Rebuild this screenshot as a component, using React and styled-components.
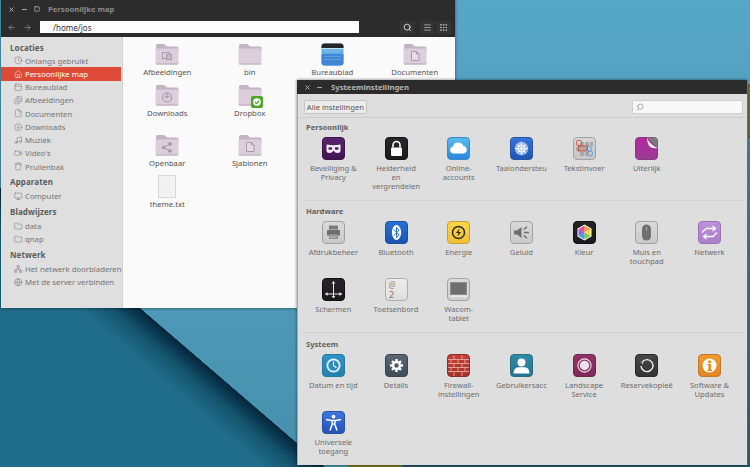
import React from 'react';
import styled, { createGlobalStyle } from 'styled-components';
import { X, Minus, Square, ArrowLeft, ArrowRight, Search, Clock, House, PanelTop, Images, File, CircleArrowDown, Music, Video, Trash, Monitor, Folder, Network, Globe, Menu, Grip } from 'lucide-react';

const Global = createGlobalStyle`
  html, body { margin: 0; padding: 0; background: #1f6d8a; }
  * { box-sizing: border-box; }
`;
const Desktop = styled.div`
  position: relative; width: 750px; height: 467px; overflow: hidden;
  font-family: "Noto Sans", sans-serif;
  background:
    linear-gradient(#77742a,#77742a) 348px 465px/54px 2px no-repeat,
    linear-gradient(#22566c,#22566c) 402px 465px/348px 2px no-repeat,
    linear-gradient(#6d6b2c,#56703e) 748px 84px/2px 54px no-repeat,
    linear-gradient(#4d7f95,#2c5c72) 748px 138px/2px 329px no-repeat,
    linear-gradient(40.7deg, #1f6d8a 0, #1f6d8a 172px, #15556f 192px, #0a3850 204px, #05263a 211.5px, transparent 212px),
    linear-gradient(180deg, #56a6c5 0%, #4f9cba 50%, #4690ad 100%);
`;
const Win = styled.section`
  position: absolute; left: ${p => p.$x}px; top: ${p => p.$y}px; width: ${p => p.$w}px; height: ${p => p.$h}px;
  display: flex; flex-direction: column; overflow: hidden;
  box-shadow: 0 0 3px rgba(0,0,0,.55);
`;
const TitleBar = styled.header`
  height: ${p => p.$h}px; flex: none; background: #2c2c2c; display: flex; align-items: center;
  padding-left: ${p => p.$pad}px; color: ${p => p.$color}; font-size: 7.7px; font-weight: 700;
`;
const Ctl = styled.span`
  display: flex; width: ${p => p.$w}px; flex: none; color: #d0d0d0; align-items: center;
`;
const Toolbar = styled.div`
  height: 19px; flex: none; background: #2c2c2c; display: flex; align-items: flex-start; padding: 3px 0 0 6px; color: #8f8f8f;
`;
const NavBtn = styled.span`
  display: flex; width: 16px; height: 12px; align-items: center; flex: none;
`;
const PathEntry = styled.div`
  width: 319px; height: 12px; background: #fdfdfd; display: flex; align-items: center; padding-left: 13px;
  font-size: 8px; color: #333; margin-left: 1px; margin-right: 41px;
`;
const ToolBtn = styled.span`
  display: flex; width: ${p => p.$w}px; height: 13px; margin-right: ${p => p.$gap}px; align-items: center; justify-content: center; flex: none;
  background: #343434; border-radius: 1px;
`;
const Body = styled.div`
  flex: 1; display: flex; min-height: 0;
`;
const Sidebar = styled.nav`
  width: 122px; flex: none; background: #dfdfdf; border-right: 1px solid #d2d2d2; padding: 3px 1px 0 0;
  color: #6f6f6f; font-size: 7.75px;
`;
const SideHead = styled.div`
  height: ${p => p.$first ? 14 : 16}px; margin-top: ${p => p.$first ? 0 : .5}px; display: flex; align-items: center; padding-left: 9px; font-size: 8px; font-weight: 700; color: #5c5c5c; letter-spacing: .1px;
`;
const SideRow = styled.div`
  height: 13.25px; display: flex; align-items: center; padding-left: 13px; gap: 2.5px; white-space: nowrap;
  background: ${p => p.$on ? '#dd4a38' : 'transparent'}; color: ${p => p.$on ? '#fff' : '#757575'};
  svg { flex: none; }
`;
const Files = styled.main`
  flex: 1; background: #fafafa; padding: 6px 0 0 3px; display: grid;
  grid-template-columns: repeat(4, 82.5px); grid-template-rows: 41px 50px 41px 41px; align-content: start;
`;
const FileItem = styled.div`
  display: flex; flex-direction: column; align-items: center; font-size: 7.7px; color: #555;
  svg { display: block; }
`;
const FileIcon = styled.div`
  position: relative; height: 23px; margin-bottom: .5px;
`;
const Badge = styled.svg`
  position: absolute; right: -1px; bottom: -1px;
`;
const Panel = styled.div`
  flex: 1; background: #dedede; display: flex; flex-direction: column; min-height: 0; border-left: 1px solid #a9a9a9;
`;
const SetBar = styled.div`
  height: 24px; flex: none; border-bottom: 1px solid #cdcdcd; display: flex; justify-content: space-between; align-items: flex-start;
  padding: 6px 4px 0 6px;
`;
const AllBtn = styled.button`
  width: 63px; height: 14px; padding: 0; background: #ececec; border: 1px solid #c6c6c6; border-radius: 1px; font: 7.7px "Noto Sans", sans-serif; color: #555; white-space: nowrap;
`;
const SearchBox = styled.div`
  width: 111px; height: 14px; background: #f8f8f8; border: 1px solid #cfcfcf; border-radius: 1px; display: flex; align-items: center; padding-left: 3px; color: #888;
`;
const Sect = styled.div`
  padding: ${p => p.$pt}px 0 0 4px; height: ${p => p.$h}px; border-bottom: ${p => p.$last ? 'none' : '1px solid #d2d2d2'}; margin: 0 3px 0 3px; flex: none;
`;
const SectHead = styled.h2`
  margin: 0; height: 11px; line-height: 11px; padding-left: 1px; font-size: 7.6px; font-weight: 700; color: #5f5f5f;
`;
const SetGrid = styled.div`
  display: grid; grid-template-columns: repeat(7, 62.7px); grid-auto-rows: 57px; margin-left: -3px; margin-top: 4px;
`;
const SetItem = styled.div`
  display: flex; flex-direction: column; align-items: center; text-align: center; font-size: 7.6px; line-height: 9px; color: #6c6c6c;
  svg { display: block; margin-bottom: 3px; flex: none; }
`;
const Label = styled.span`
  white-space: pre; padding-top: .5px;
`;

const Tile = ({ a, b, line = 'rgba(0,0,0,.3)', id, children }) => (
  <svg width="23" height="23" viewBox="0 0 23 23">
    <defs><linearGradient id={id} x1="0" y1="0" x2="0" y2="1"><stop offset="0" stopColor={a} /><stop offset="1" stopColor={b} /></linearGradient></defs>
    <rect x=".5" y=".5" width="22" height="22" rx="3.5" fill={`url(#${id})`} stroke={line} />
    {children}
  </svg>
);

const FolderIcon = ({ glyph }) => (
  <svg width="24" height="23" viewBox="0 0 24 23">
    <path d="M1 2.5Q1 1 2.5 1H9L12 3.5H22Q23.5 3.5 23.5 5V9H1Z" fill="#c5b3c4" />
    <path d="M.5 5.5H22Q23.5 5.5 23.5 7V20Q23.5 21.5 22 21.5H2Q.5 21.5 .5 20Z" fill="#dccfdb" />
    <path d="M.5 20.6H23.5V20Q23.5 21.5 22 21.5H2Q.5 21.5 .5 20Z" fill="#b9a8b8" />
    {glyph === 'pic' && <g fill="none" stroke="#a99aa8"><rect x="7.5" y="9.5" width="7" height="6" /><rect x="11.5" y="11.5" width="5" height="5" fill="#cbbdca" /></g>}
    {glyph === 'dl' && <g fill="none" stroke="#a99aa8" strokeWidth="1.1"><circle cx="12" cy="13.5" r="4.5" /><path d="M12 8v5.5M10 11.8l2 2 2-2" /></g>}
    {glyph === 'share' && <g fill="#a99aa8" stroke="#a99aa8"><circle cx="8.5" cy="13.5" r="1.4" /><circle cx="15" cy="10" r="1.4" /><circle cx="15" cy="17" r="1.4" /><path d="M8.5 13.5L15 10M8.5 13.5L15 17" fill="none" /></g>}
    {glyph === 'doc' && <path d="M8.5 8.5h5l2.5 2.5v6.5h-7.5zM13.5 8.5v2.5h2.5" fill="#e6dbe5" stroke="#a99aa8" />}
  </svg>
);

const Bureaublad = () => (
  <svg width="23" height="23" viewBox="0 0 23 23">
    <rect x=".5" y=".5" width="22" height="22" rx="3" fill="#63ade4" />
    <path d="M.5 5V3.5Q.5 .5 3.5 .5H19.5Q22.5 .5 22.5 3.5V5Z" fill="#24252b" />
    <rect x=".5" y="5" width="22" height="1.2" fill="#bfe0f5" />
    <path d="M.5 11H22.5V19.5Q22.5 22.5 19.5 22.5H3.5Q.5 22.5 .5 19.5Z" fill="#3f87d4" />
    <path d="M3 8.5H20M3 13.5H20M3 16.5H20" stroke="#fff" strokeOpacity=".18" />
  </svg>
);
const TextDoc = () => (
  <svg width="18" height="23" viewBox="0 0 18 23">
    <rect x=".5" y=".5" width="17" height="22" fill="#f3f3f3" stroke="#d6d6d6" />
    <path d="M3 5h12M3 8h12M3 11h12M3 14h12M3 17h12" stroke="#e9e9e9" strokeDasharray="1 1" />
  </svg>
);

const icons = {
  privacy: <Tile id="a1" a="#5a2470" b="#421552" line="#3a1548"><path d="M4.5 7.5Q11.5 9 18.5 7.5V13.5Q18.5 16 15.5 16Q13 16 11.5 13.5Q10 16 7.5 16Q4.5 16 4.5 13.5Z" fill="#f3edf5" /><rect x="6.5" y="10.2" width="3.6" height="2.6" rx=".8" fill="#4a1c5c" /><rect x="12.9" y="10.2" width="3.6" height="2.6" rx=".8" fill="#4a1c5c" /></Tile>,
  lock: <Tile id="a2" a="#2a272b" b="#1c1a1d" line="#141214"><path d="M8 10.5V8a3.5 3.5 0 0 1 7 0v2.5" fill="none" stroke="#fff" strokeWidth="1.6" /><rect x="6" y="10.5" width="11" height="8.5" rx=".8" fill="#fff" /></Tile>,
  cloud: <Tile id="a3" a="#59bcef" b="#2a84e0" line="#3a8cc8"><path d="M6.5 16.5a3.6 3.6 0 0 1-.6-7.1a5.5 5.5 0 0 1 10.3-.7a4 4 0 0 1 .6 7.8Z" fill="#fff" /></Tile>,
  lang: <Tile id="a4" a="#3974d6" b="#1f54b4" line="#2a55a0"><circle cx="11.5" cy="11.5" r="6.7" fill="#9fbce8" /><circle cx="11.5" cy="11.5" r="3.6" fill="none" stroke="#fff" /><path d="M4.8 11.5H18.2M11.5 4.8V18.2M7 7l9 9M16 7l-9 9" stroke="#fff" strokeWidth=".7" /></Tile>,
  input: <Tile id="a5" a="#d6d6d6" b="#c6c6c6" line="#a2a2a2"><g fill="#a9a9a9"><rect x="7" y="5" width="4" height="4" /><rect x="12" y="5" width="4" height="4" /><rect x="17" y="5" width="3" height="4" /><rect x="3" y="10" width="4" height="4" /><rect x="12" y="15" width="4" height="4" /><rect x="7" y="15" width="4" height="4" /></g><rect x="3.5" y="3.5" width="5" height="5" rx="1.5" fill="none" stroke="#d8604a" /><rect x="5.5" y="9" width="9" height="5" fill="#b9a2a0" stroke="#c9523e" /><circle cx="16" cy="11.5" r="2.5" fill="none" stroke="#5b9fdf" /><circle cx="17" cy="16.5" r="2.5" fill="none" stroke="#5b9fdf" /></Tile>,
  look: <Tile id="a6" a="#b2289d" b="#9a3d93" line="#863a80"><path d="M12 .5H19.5Q22.5 .5 22.5 3.5V11Z" fill="#7a7a7a" /><path d="M12 .5Q14 7 22.5 11Q17 12 14 9Q12 6 12 .5Z" fill="#f2f2f2" /></Tile>,
  printer: <Tile id="a7" a="#dadada" b="#c9c9c9" line="#a2a2a2"><rect x="7" y="4.5" width="9" height="4" fill="#7c7c7c" /><rect x="5" y="9" width="13" height="5.5" rx=".8" fill="#6e6e6e" /><rect x="7" y="13" width="9" height="5" fill="#8a8a8a" /><path d="M8 15h7M8 16.5h7" stroke="#ccc" strokeWidth=".6" /></Tile>,
  bt: <Tile id="a8" a="#2672d8" b="#1a52b0" line="#1d4f9c"><ellipse cx="11.5" cy="11.5" rx="4.6" ry="7.5" fill="#fff" /><path d="M8.8 8.6l5.4 5.4-2.7 2.6V6.4l2.7 2.6-5.4 5.4" fill="none" stroke="#2a6fd0" strokeWidth="1" /></Tile>,
  energy: <Tile id="a9" a="#fbd647" b="#f2c033" line="#c8a238"><circle cx="11.5" cy="11.5" r="6" fill="none" stroke="#2a2a2a" strokeWidth="1.5" /><path d="M12.6 7.2L9 12h2.4l-1 3.8L14 11h-2.4Z" fill="#2a2a2a" /></Tile>,
  sound: <Tile id="a10" a="#d9d9d9" b="#cacaca" line="#a2a2a2"><path d="M4 9.5H7L11.5 6V17L7 13.5H4Z" fill="#6e6e6e" /><path d="M14 11.5H19M13.8 8.6L17 5.8M13.8 14.4L17 17.2" stroke="#6e6e6e" strokeWidth="1.3" /></Tile>,
  color: <Tile id="a11" a="#262327" b="#1b191c" line="#121112"><path d="M11.5 3.5L18.5 7.5V15.5L11.5 19.5L4.5 15.5V7.5Z" fill="#fff" /><g><path d="M11.5 11.5L11.5 4.6L17.5 8Z" fill="#f6a13a" /><path d="M11.5 11.5L17.5 8V15Z" fill="#f4d93f" /><path d="M11.5 11.5L17.5 15L11.5 18.4Z" fill="#7dc84a" /><path d="M11.5 11.5L11.5 18.4L5.5 15Z" fill="#43a6e0" /><path d="M11.5 11.5L5.5 15V8Z" fill="#8d62d6" /><path d="M11.5 11.5L5.5 8L11.5 4.6Z" fill="#ea4f86" /></g></Tile>,
  mouse: <Tile id="a12" a="#dadada" b="#c9c9c9" line="#a2a2a2"><rect x="7" y="3.5" width="9" height="16" rx="4.5" fill="#6f6f6f" /><rect x="10.8" y="6" width="1.4" height="3.5" rx=".7" fill="#a6a6a6" /></Tile>,
  net: <Tile id="a13" a="#bd91dc" b="#ab7fcc" line="#9874b4"><path d="M4 11.5L8 7.5H17M14.5 5L17.5 7.5L14.5 10M19 11.5L15 15.5H6M8.5 13L5.5 15.5L8.5 18" fill="none" stroke="#fff" strokeWidth="1.3" /></Tile>,
  screen: <Tile id="a14" a="#28242c" b="#1a171c" line="#110f12"><path d="M11.5 3.5V20M3.5 16H20" stroke="#fff" strokeWidth=".9" /><path d="M10 5.5l1.5-2 1.5 2M10 18l1.5 2 1.5-2M5.5 14.5l-2 1.5 2 1.5M17.5 14.5l2 1.5-2 1.5" fill="#fff" stroke="#fff" strokeWidth=".5" /></Tile>,
  keys: <Tile id="a15" a="#ececec" b="#dedede" line="#adadad"><text x="3.5" y="9.5" fontSize="8" fontFamily="Noto Sans" fill="#8a8a8a">@</text><text x="4" y="20" fontSize="9" fontFamily="Noto Sans" fill="#777">2</text></Tile>,
  wacom: <Tile id="a16" a="#dcdcdc" b="#cfcfcf" line="#a2a2a2"><rect x="3.5" y="4.5" width="16" height="12" fill="#6f6f6f" stroke="#8c8c8c" /><rect x="3.5" y="17.5" width="16" height="1.5" fill="#ededed" /></Tile>,
  time: <Tile id="a17" a="#2f94c8" b="#2480b0" line="#2878a0"><circle cx="11.5" cy="11.5" r="7" fill="#ecf6fb" /><circle cx="11.5" cy="11.5" r="5.2" fill="#2a8cc0" /><path d="M11.5 7.5V11.5L14.5 14" fill="none" stroke="#ecf6fb" strokeWidth="1.2" /></Tile>,
  gear: <Tile id="a18" a="#5a6874" b="#3e4c58" line="#3a444e"><path d="M11.5 5v13M5 11.5h13M7 7l9 9M16 7l-9 9" stroke="#fff" strokeWidth="2.4" /><circle cx="11.5" cy="11.5" r="4.6" fill="#fff" /><circle cx="11.5" cy="11.5" r="2.2" fill="#4c5a66" /></Tile>,
  wall: <Tile id="a19" a="#c64036" b="#a93028" line="#8a3028"><path d="M1 5.5H22M1 9.5H22M1 13.5H22M1 17.5H22M7 1.5V5.5M15 1.5V5.5M4 5.5V9.5M11 5.5V9.5M18 5.5V9.5M7 9.5V13.5M15 9.5V13.5M4 13.5V17.5M11 13.5V17.5M18 13.5V17.5M7 17.5V22M15 17.5V22" stroke="#e8b8ae" strokeWidth=".8" /></Tile>,
  user: <Tile id="a20" a="#2f8ba6" b="#24748e" line="#2a6c80"><circle cx="11.5" cy="8.5" r="4" fill="#fff" /><path d="M3.5 19.5Q3.5 13.5 8.5 13.2H14.5Q19.5 13.5 19.5 19.5Z" fill="#fff" /></Tile>,
  land: <Tile id="a21" a="#943268" b="#80285a" line="#6c2a50"><circle cx="11.5" cy="11.5" r="6.6" fill="none" stroke="#efe2ea" strokeWidth="1.1" /><circle cx="11.5" cy="11.5" r="4.7" fill="#efe2ea" /></Tile>,
  backup: <Tile id="a22" a="#474747" b="#333" line="#2a2a2a"><path d="M7.2 8a6 6 0 1 1-1.2 4" fill="none" stroke="#f2f2f2" strokeWidth="1.4" /><path d="M5 7.5l3.6.4-.6 3.2Z" fill="#9a9a9a" /></Tile>,
  soft: <Tile id="a23" a="#f29a2c" b="#e48420" line="#c07a30"><circle cx="11.5" cy="11.5" r="7" fill="#fff" /><rect x="10.2" y="6.5" width="2.8" height="2.5" fill="#e88b22" /><path d="M9.5 10H13V15.5H14V17H9.5V15.5H10.5V11.5H9.5Z" fill="#e88b22" /></Tile>,
  access: <Tile id="a24" a="#3a78e0" b="#2452b8" line="#2a52a0"><circle cx="11.5" cy="5.6" r="1.9" fill="#fff" /><path d="M4 8.6L9.5 9.6H13.5L19 8.6M9.8 9.6L10.3 13L8 19.5M13.2 9.6L12.7 13L15 19.5M10.3 13H12.7" fill="none" stroke="#fff" strokeWidth="1.5" /></Tile>,
};

const sidebar = [
  { head: 'Locaties', rows: [[Clock, 'Onlangs gebruikt'], [House, 'Persoonlijke map', true], [PanelTop, 'Bureaublad'], [Images, 'Afbeeldingen'], [File, 'Documenten'], [CircleArrowDown, 'Downloads'], [Music, 'Muziek'], [Video, "Video's"], [Trash, 'Prullenbak']] },
  { head: 'Apparaten', rows: [[Monitor, 'Computer']] },
  { head: 'Bladwijzers', rows: [[Folder, 'data'], [Folder, 'qnap']] },
  { head: 'Netwerk', rows: [[Network, 'Het netwerk doorbladeren'], [Globe, 'Met de server verbinden']] },
];

const files = [
  ['Afbeeldingen', 'pic'], ['bin', ''], ['Bureaublad', 'desk'], ['Documenten', 'doc'],
  ['Downloads', 'dl'], ['Dropbox', 'box'], null, null,
  ['Openbaar', 'share'], ['Sjablonen', 'doc'], null, null,
  ['theme.txt', 'txt'],
];

const sections = [
  { name: 'Persoonlijk', pt: 4, h: 83, items: [['privacy', 'Beveiliging &\nPrivacy'], ['lock', 'Helderheid\nen\nvergrendelen'], ['cloud', 'Online-\naccounts'], ['lang', 'Taalondersteu'], ['input', 'Tekstinvoer'], ['look', 'Uiterlijk']] },
  { name: 'Hardware', pt: 5, h: 132, items: [['printer', 'Afdrukbeheer'], ['bt', 'Bluetooth'], ['energy', 'Energie'], ['sound', 'Geluid'], ['color', 'Kleur'], ['mouse', 'Muis en\ntouchpad'], ['net', 'Netwerk'], ['screen', 'Schermen'], ['keys', 'Toetsenbord'], ['wacom', 'Wacom-\ntablet']] },
  { name: 'Systeem', pt: 6, h: 130, last: true, items: [['time', 'Datum en tijd'], ['gear', 'Details'], ['wall', 'Firewall-\ninstellingen'], ['user', 'Gebruikersacc'], ['land', 'Landscape\nService'], ['backup', 'Reservekopieë'], ['soft', 'Software &\nUpdates'], ['access', 'Universele\ntoegang']] },
];

const fileIcon = g => {
  if (g === 'desk') return <Bureaublad />;
  if (g === 'txt') return <TextDoc />;
  return <FolderIcon glyph={g} />;
};

export default function App() {
  return (
    <Desktop>
      <Global />
      <Win $x={1} $y={0} $w={454} $h={308}>
        <TitleBar $h={18} $pad={6.5} $color="#8a8a8a">
          <Ctl $w={13}><X size={7} strokeWidth={2.6} /></Ctl>
          <Ctl $w={13}><Minus size={7} strokeWidth={2.6} /></Ctl>
          <Ctl $w={14.5}><Square size={6} strokeWidth={2.4} /></Ctl>
          Persoonlijke map
        </TitleBar>
        <Toolbar>
          <NavBtn><ArrowLeft size={9} /></NavBtn>
          <NavBtn><ArrowRight size={9} /></NavBtn>
          <PathEntry>/home/jos</PathEntry>
          <ToolBtn $w={15} $gap={5}><Search size={9} color="#ddd" strokeWidth={2.4} /></ToolBtn>
          <ToolBtn $w={14} $gap={2}><Menu size={9} color="#bbb" strokeWidth={2} /></ToolBtn>
          <ToolBtn $w={15} $gap={0}><Grip size={9} color="#bbb" strokeWidth={2.4} /></ToolBtn>
        </Toolbar>
        <Body>
          <Sidebar>
            {sidebar.map((s, i) => (
              <React.Fragment key={s.head}>
                <SideHead $first={i === 0}>{s.head}</SideHead>
                {s.rows.map(([Icon, t, on]) => (
                  <SideRow key={t} $on={on}><Icon size={8.5} strokeWidth={1.4} color={on ? '#fff' : '#6f6f6f'} />{t}</SideRow>
                ))}
              </React.Fragment>
            ))}
          </Sidebar>
          <Files>
            {files.map((f, i) => f ? (
              <FileItem key={f[0]}>
                <FileIcon>
                  {fileIcon(f[1])}
                  {f[1] === 'box' && (
                    <Badge width="12" height="12" viewBox="0 0 12 12"><rect width="12" height="12" rx="2" fill="#4ea52c" /><circle cx="6" cy="6" r="3.8" fill="#fff" /><path d="M4 6l1.6 1.6L8.2 4.6" fill="none" stroke="#4ea52c" strokeWidth="1.3" /></Badge>
                  )}
                </FileIcon>
                {f[0]}
              </FileItem>
            ) : <span key={i} />)}
          </Files>
        </Body>
      </Win>
      <Win $x={297} $y={80} $w={450} $h={385}>
        <TitleBar $h={14} $pad={7} $color="#b5b5b5">
          <Ctl $w={12}><X size={7} strokeWidth={2.6} /></Ctl>
          <Ctl $w={15}><Minus size={7} strokeWidth={2.6} /></Ctl>
          Systeeminstellingen
        </TitleBar>
        <Panel>
          <SetBar>
            <AllBtn>Alle instellingen</AllBtn>
            <SearchBox><Search size={8} style={{ transform: 'scaleX(-1)' }} /></SearchBox>
          </SetBar>
          {sections.map(s => (
            <Sect key={s.name} $pt={s.pt} $h={s.h} $last={s.last}>
              <SectHead>{s.name}</SectHead>
              <SetGrid>
                {s.items.map(([ic, t]) => (
                  <SetItem key={t}>{icons[ic]}<Label>{t}</Label></SetItem>
                ))}
              </SetGrid>
            </Sect>
          ))}
        </Panel>
      </Win>
    </Desktop>
  );
}
